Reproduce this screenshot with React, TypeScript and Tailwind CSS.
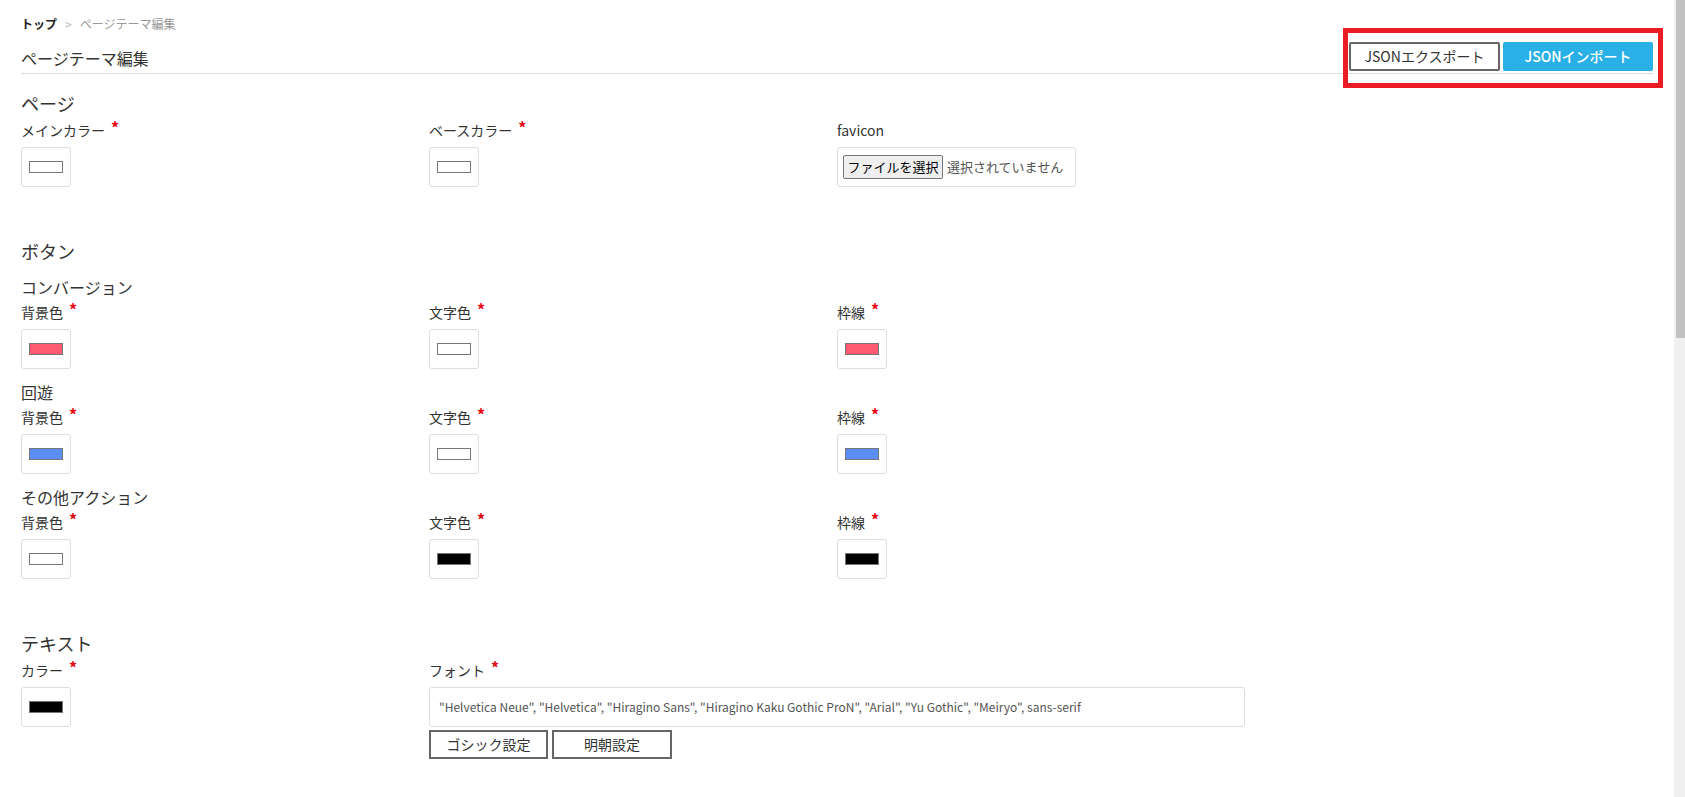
const FONT = "font-['Noto_Sans_CJK_JP','Noto_Sans',sans-serif]"

function Req() {
  return (
    <span className="relative -top-[3px] ml-[6px] inline-block align-top text-[16px] font-bold leading-[20px] text-[#e60012]">
      *
    </span>
  )
}

function Label({ children, required = true }: { children: React.ReactNode; required?: boolean }) {
  return (
    <div className="text-[14px] leading-[20px] text-[#333]">
      {children}
      {required && <Req />}
    </div>
  )
}

function ColorField({ label, swatch }: { label: string; swatch: string }) {
  return (
    <div>
      <Label>{label}</Label>
      <div className="mt-[7px] flex h-[40px] w-[50px] items-center justify-center rounded-[3px] border border-[#ddd] bg-white">
        <div className={`h-[12px] w-[34px] border border-[#777] ${swatch}`} />
      </div>
    </div>
  )
}

function SectionTitle({ children, first = false }: { children: React.ReactNode; first?: boolean }) {
  return (
    <h2 className={`${first ? 'mt-[16px]' : 'mt-[51px]'} text-[18px] leading-[26px] text-[#333]`}>{children}</h2>
  )
}

function SubTitle({ children }: { children: React.ReactNode }) {
  return <h3 className="mt-[12px] text-[16px] leading-[22px] text-[#333]">{children}</h3>
}

const buttonGroups = [
  { name: 'コンバージョン', bg: 'bg-[#ff5a6f]', text: 'bg-white', border: 'bg-[#ff5a6f]' },
  { name: '回遊', bg: 'bg-[#5b8ff6]', text: 'bg-white', border: 'bg-[#5b8ff6]' },
  { name: 'その他アクション', bg: 'bg-white', text: 'bg-black', border: 'bg-black' }
]

export default function App() {
  return (
    <div className={`flex h-screen overflow-hidden bg-white text-[#333] ${FONT}`}>
      <main className="min-w-0 flex-1 px-[21px] pt-[15px]">
        {/* Breadcrumb */}
        <nav className="flex items-center text-[12px] leading-[18px]">
          <span className="font-bold text-[#222]">トップ</span>
          <span className="mx-[8px] text-[#bbb]">&gt;</span>
          <span className="text-[#999]">ページテーマ編集</span>
        </nav>

        {/* Header */}
        <div className="relative mt-[9px] flex items-end justify-between border-b border-[#ddd] pb-[2px]">
          <h1 className="mb-[1px] text-[16px] leading-[24px] text-[#333]">ページテーマ編集</h1>
          <div className="flex gap-[3px]">
            <button className="h-[29px] w-[151px] rounded-[2px] border-2 border-[#666] bg-white text-[14px] text-[#333]">
              JSONエクスポート
            </button>
            <button className="h-[29px] w-[150px] rounded-[2px] bg-[#29b0e6] text-[14px] font-medium text-white">
              JSONインポート
            </button>
          </div>
          <div className="pointer-events-none absolute -right-[10px] -top-[14px] h-[60px] w-[320px] border-[5px] border-[#ec1c24]" />
        </div>

        {/* Page */}
        <SectionTitle first>ページ</SectionTitle>
        <div className="mt-[4px] grid grid-cols-4">
          <ColorField label="メインカラー" swatch="bg-white" />
          <ColorField label="ベースカラー" swatch="bg-white" />
          <div>
            <Label required={false}>favicon</Label>
            <div className="mt-[7px] flex h-[40px] w-[239px] items-center rounded-[3px] border border-[#ddd] bg-white px-[5px]">
              <span className="flex h-[24px] w-[100px] items-center justify-center rounded-[2px] border border-[#767676] bg-[#efefef] text-[13px] text-black">
                ファイルを選択
              </span>
              <span className="ml-[4px] text-[13px] text-[#555]">選択されていません</span>
            </div>
          </div>
        </div>

        {/* Buttons */}
        <SectionTitle>ボタン</SectionTitle>
        {buttonGroups.map((g) => (
          <div key={g.name}>
            <SubTitle>{g.name}</SubTitle>
            <div className="mt-[4px] grid grid-cols-4">
              <ColorField label="背景色" swatch={g.bg} />
              <ColorField label="文字色" swatch={g.text} />
              <ColorField label="枠線" swatch={g.border} />
            </div>
          </div>
        ))}

        {/* Text */}
        <SectionTitle>テキスト</SectionTitle>
        <div className="mt-[4px] grid grid-cols-4">
          <ColorField label="カラー" swatch="bg-black" />
          <div className="col-span-2">
            <Label>フォント</Label>
            <div className="mt-[7px] flex h-[40px] items-center rounded-[3px] border border-[#ddd] bg-white px-[9px] text-[12px] text-[#555]">
              "Helvetica Neue", "Helvetica", "Hiragino Sans", "Hiragino Kaku Gothic ProN", "Arial", "Yu Gothic", "Meiryo", sans-serif
            </div>
            <div className="mt-[3px] flex gap-[4px]">
              <button className="h-[29px] w-[119px] border-2 border-[#666] bg-white text-[14px] text-[#333]">
                ゴシック設定
              </button>
              <button className="h-[29px] w-[120px] border-2 border-[#666] bg-white text-[14px] text-[#333]">
                明朝設定
              </button>
            </div>
          </div>
        </div>
      </main>

      {/* Scrollbar */}
      <aside className="w-[11px] shrink-0 bg-[#f0f0f0] pl-[2px]">
        <div className="h-[338px] bg-[#c1c1c1]" />
      </aside>
    </div>
  )
}
